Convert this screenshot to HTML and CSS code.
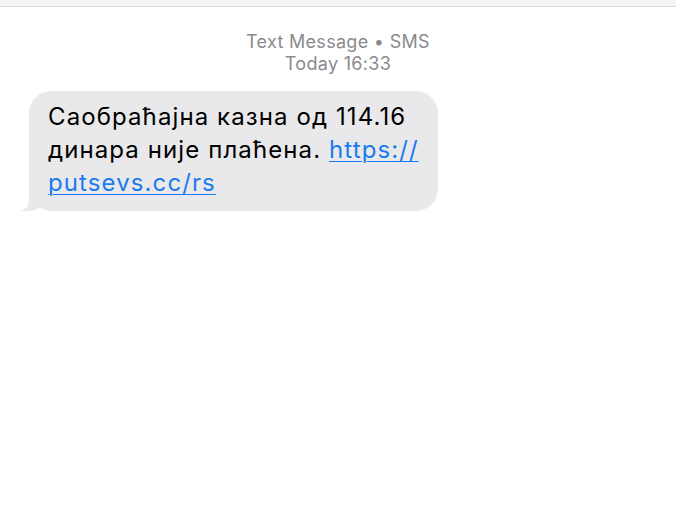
FILE: index.html
```html
<!DOCTYPE html>
<html lang="sr">
<head>
  <meta charset="UTF-8" />
  <meta name="viewport" content="width=device-width, initial-scale=1.0"/>
  <title>Text Message</title>
  <link rel="stylesheet" href="styles.css">
</head>
<body>
  <div class="topbar"></div>

  <main class="thread">
    <div class="meta">
      <p>Text Message • SMS</p>
      <p>Today 16:33</p>
    </div>

    <!-- Incoming message -->
    <div class="bubble">
      <p>Саобраћајна казна од 114.16</p>
      <p>динара није плаћена. <a href="#">https://</a></p>
      <p><a href="#">putsevs.cc/rs</a></p>
    </div>
  </main>
</body>
</html>
```

FILE: styles.css
```css
body {
  margin: 0;
  background: #ffffff;
  font-family: Inter, "Liberation Sans", sans-serif;
}

.topbar {
  height: 6px;
  background: #f4f4f4;
  border-bottom: 1px solid #dcdcdc;
}

.thread {
  padding: 0 0 0 29px;
}

.meta {
  text-align: center;
  color: #8a8a8e;
  font-size: 18px;
  letter-spacing: 0.3px;
  line-height: 22px;
  margin: 24px 0 16px -29px;
}

.meta p {
  margin: 0;
}

.bubble {
  position: relative;
  box-sizing: border-box;
  width: 409px;
  background: #e9e9eb;
  color: #000000;
  font-size: 24px;
  letter-spacing: 1.1px;
  line-height: 33px;
  padding: 9px 10px 12px 19px;
  border-radius: 22px;
}

.bubble p {
  margin: 0;
  white-space: nowrap;
}

.bubble a {
  color: #1a7bf0;
  text-decoration: underline;
  text-underline-offset: 3px;
  text-decoration-thickness: 1px;
}

/* tail */
.bubble::before {
  content: "";
  position: absolute;
  left: -8px;
  bottom: 0;
  width: 24px;
  height: 20px;
  background: #e9e9eb;
  border-bottom-right-radius: 16px 14px;
}

.bubble::after {
  content: "";
  position: absolute;
  left: -16px;
  bottom: 0;
  width: 16px;
  height: 22px;
  background: #ffffff;
  border-bottom-right-radius: 10px;
}
```
